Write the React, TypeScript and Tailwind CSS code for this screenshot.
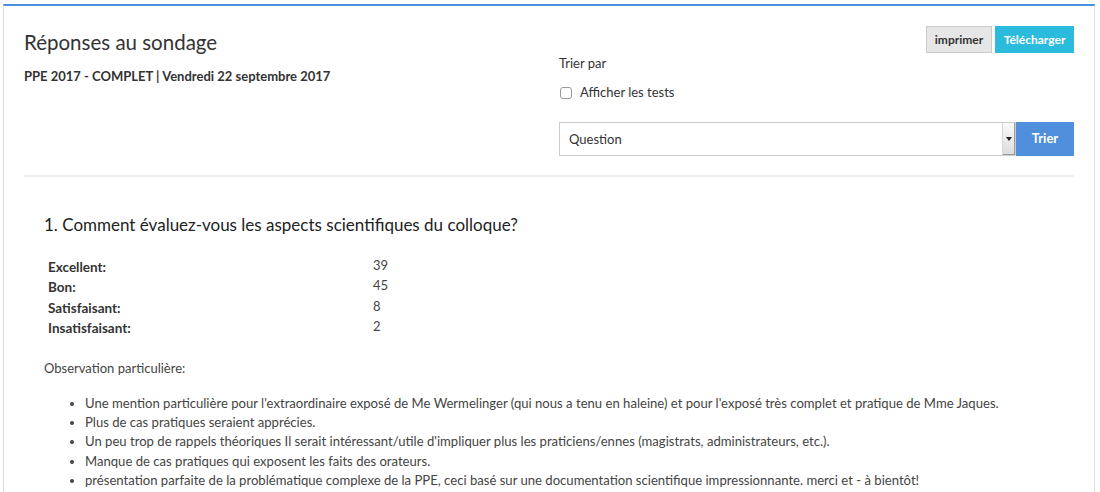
import React from "react";

const ratings = [
  { label: "Excellent:", value: 39 },
  { label: "Bon:", value: 45 },
  { label: "Satisfaisant:", value: 8 },
  { label: "Insatisfaisant:", value: 2 },
];

const remarks = [
  "Une mention particulière pour l'extraordinaire exposé de Me Wermelinger (qui nous a tenu en haleine) et pour l'exposé très complet et pratique de Mme Jaques.",
  "Plus de cas pratiques seraient apprécies.",
  "Un peu trop de rappels théoriques Il serait intéressant/utile d'impliquer plus les praticiens/ennes (magistrats, administrateurs, etc.).",
  "Manque de cas pratiques qui exposent les faits des orateurs.",
  "présentation parfaite de la problématique complexe de la PPE, ceci basé sur une documentation scientifique impressionnante. merci et - à bientôt!",
];

export default function App() {
  return (
    <div className="h-[492px] overflow-hidden bg-white pt-[4px] pl-[3px] pr-[5px] font-['Lato','Noto_Sans',sans-serif] text-[#333]">
      <div className="h-[500px] border-t-2 border-t-[#4a90e2] border-x border-x-[#dddddd] px-[20px]">
        {/* Header */}
        <div className="flex">
          <div className="flex-1">
            <h1 className="mt-[23px] text-[20.5px] leading-[26px] font-normal text-[#333]">
              Réponses au sondage
            </h1>
            <p className="mt-[12px] text-[13px] leading-[18px] font-bold text-[#333]">
              PPE 2017 - COMPLET | Vendredi 22 septembre 2017
            </p>
          </div>
          <div className="w-[515px]">
            <div className="mt-[20px] flex justify-end gap-[3px]">
              <button className="h-[27px] w-[66px] border border-[#cccccc] bg-[#e6e6e6] text-[12px] font-bold text-[#333]">
                imprimer
              </button>
              <button className="h-[27px] w-[79px] bg-[#2bbbdd] text-[12px] font-bold text-white">
                Télécharger
              </button>
            </div>
            <p className="mt-[1px] text-[13px] leading-[18px]">Trier par</p>
            <label className="mt-[12px] flex h-[18px] items-center gap-[8px] text-[13px]">
              <span className="ml-[1px] h-[12px] w-[12px] rounded-[3px] border border-[#999] bg-white" />
              Afficher les tests
            </label>
            <div className="mt-[20px] flex h-[34px]">
              <div className="flex flex-1 items-center border border-[#cccccc] bg-white">
                <span className="flex-1 pl-[9px] pt-[2px] text-[13px]">Question</span>
                <span className="flex h-full w-[13px] items-center justify-center border-l border-[#d8d8d8] bg-gradient-to-b from-[#fafafa] to-[#dcdcdc] shadow-[inset_-1px_-1px_0_#9a9a9a]">
                  <svg width="6" height="4" viewBox="0 0 6 4">
                    <path d="M0 0h6L3 4z" fill="#222" />
                  </svg>
                </span>
              </div>
              <button className="w-[58px] bg-[#4f8fdb] text-[13px] font-bold text-white">
                Trier
              </button>
            </div>
          </div>
        </div>

        <div className="mt-[19px] h-[2px] bg-[#eeeeee]" />

        {/* Question */}
        <div className="pl-[20px]">
          <h2 className="mt-[36px] text-[17px] leading-[24px] text-[#222]">
            1. Comment évaluez-vous les aspects scientifiques du colloque?
          </h2>
          <table className="mt-[19px] text-[13px]">
            <tbody>
              {ratings.map((r) => (
                <tr key={r.label} className="h-[20.3px]">
                  <td className="w-[329px] pl-[4px] align-top pt-[2px] text-[13.5px] font-bold leading-[18px] text-[#333]">
                    {r.label}
                  </td>
                  <td className="align-top leading-[18px] text-[#444]">{r.value}</td>
                </tr>
              ))}
            </tbody>
          </table>

          <p className="mt-[22px] text-[13px] leading-[18px] text-[#444]">
            Observation particulière:
          </p>
          <ul className="mt-[16.5px] list-disc pl-[41px] text-[13.1px] text-[#444]">
            {remarks.map((t) => (
              <li key={t} className="leading-[19.3px]">
                {t}
              </li>
            ))}
          </ul>
        </div>
      </div>
    </div>
  );
}
